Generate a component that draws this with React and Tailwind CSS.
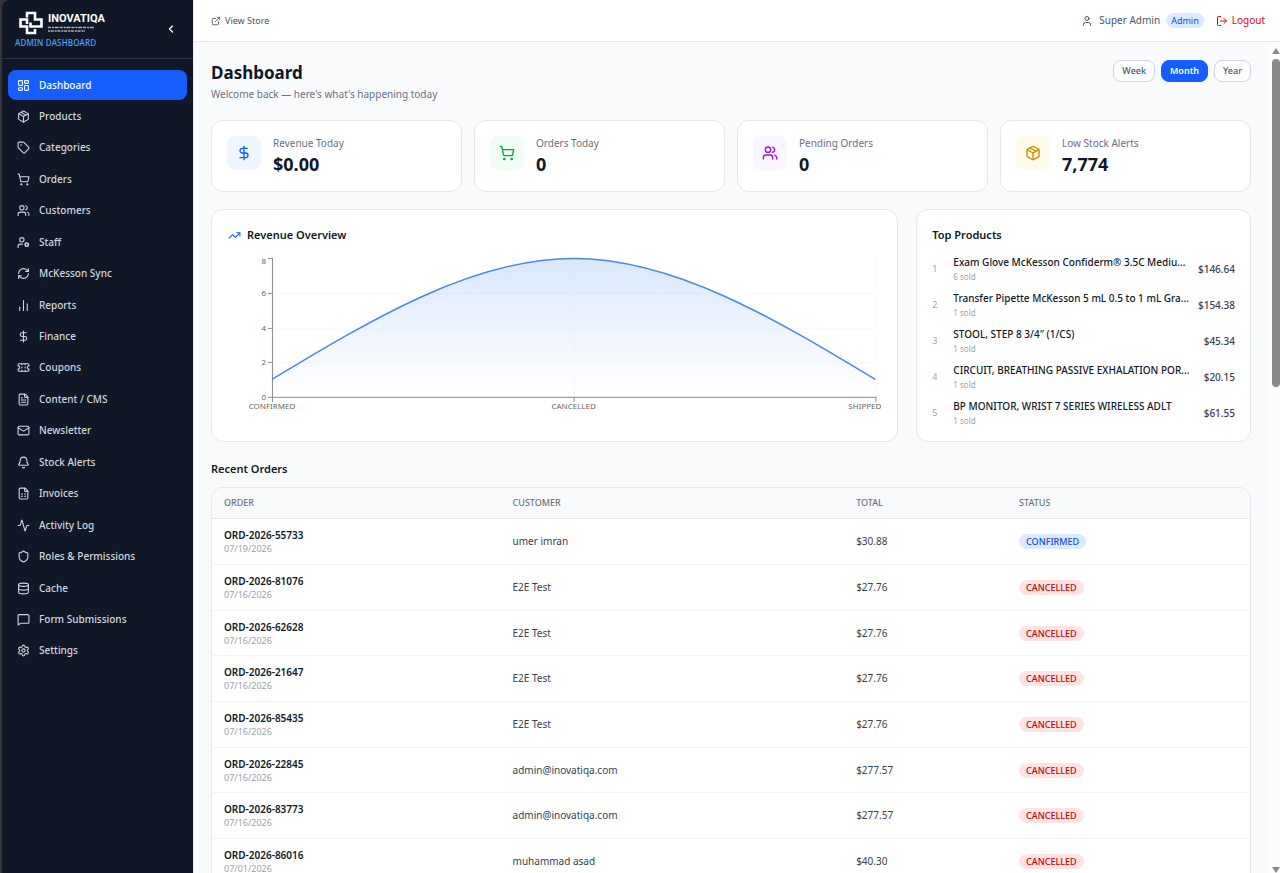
import React, { useState } from "react";
import {
  Activity,
  Bell,
  ChartNoAxesColumn,
  ChevronLeft,
  Database,
  DollarSign,
  ExternalLink,
  FileSpreadsheet,
  FileText,
  LayoutDashboard,
  LogOut,
  Mail,
  MessageSquare,
  Package,
  RefreshCw,
  Settings,
  Shield,
  ShoppingCart,
  Tag,
  TrendingUp,
  User,
  Users,
} from "lucide-react";

function Icon({ children, className }) {
  return (
    <svg viewBox="0 0 24 24" fill="none" stroke="currentColor" strokeWidth="2" strokeLinecap="round" strokeLinejoin="round" className={className} aria-hidden="true">
      {children}
    </svg>
  );
}

function CouponIcon({ className }) {
  return (
    <Icon className={className}>
      <path d="M2 9a3 3 0 0 1 0 6v2a2 2 0 0 0 2 2h16a2 2 0 0 0 2-2v-2a3 3 0 0 1 0-6V7a2 2 0 0 0-2-2H4a2 2 0 0 0-2 2Z" />
      <path d="M9 5v2M9 17v2M9 11v2M15 5v2M15 17v2M15 11v2" />
    </Icon>
  );
}

function StaffIcon({ className }) {
  return (
    <Icon className={className}>
      <circle cx="9" cy="7" r="4" />
      <path d="M10 15H6a4 4 0 0 0-4 4v2" />
      <circle cx="18" cy="16" r="3" strokeWidth="3" />
    </Icon>
  );
}

const NAV = [
  ["Dashboard", LayoutDashboard],
  ["Products", Package],
  ["Categories", Tag],
  ["Orders", ShoppingCart],
  ["Customers", Users],
  ["Staff", StaffIcon],
  ["McKesson Sync", RefreshCw],
  ["Reports", ChartNoAxesColumn],
  ["Finance", DollarSign],
  ["Coupons", CouponIcon],
  ["Content / CMS", FileText],
  ["Newsletter", Mail],
  ["Stock Alerts", Bell],
  ["Invoices", FileSpreadsheet],
  ["Activity Log", Activity],
  ["Roles & Permissions", Shield],
  ["Cache", Database],
  ["Form Submissions", MessageSquare],
  ["Settings", Settings],
];

const STATS = [
  { label: "Revenue Today", value: "$0.00", icon: DollarSign, tone: "bg-blue-50 text-blue-600" },
  { label: "Orders Today", value: "0", icon: ShoppingCart, tone: "bg-green-50 text-green-600" },
  { label: "Pending Orders", value: "0", icon: Users, tone: "bg-purple-50 text-purple-600" },
  { label: "Low Stock Alerts", value: "7,774", icon: Package, tone: "bg-yellow-50 text-yellow-600" },
];

const PRODUCTS = [
  ["Exam Glove McKesson Confiderm® 3.5C Mediu...", "6 sold", "$146.64"],
  ["Transfer Pipette McKesson 5 mL 0.5 to 1 mL Gra...", "1 sold", "$154.38"],
  ["STOOL, STEP 8 3/4″ (1/CS)", "1 sold", "$45.34"],
  ["CIRCUIT, BREATHING PASSIVE EXHALATION POR...", "1 sold", "$20.15"],
  ["BP MONITOR, WRIST 7 SERIES WIRELESS ADLT", "1 sold", "$61.55"],
];

const ORDERS = [
  ["ORD-2026-55733", "07/19/2026", "umer imran", "$30.88", "CONFIRMED"],
  ["ORD-2026-81076", "07/16/2026", "E2E Test", "$27.76", "CANCELLED"],
  ["ORD-2026-62628", "07/16/2026", "E2E Test", "$27.76", "CANCELLED"],
  ["ORD-2026-21647", "07/16/2026", "E2E Test", "$27.76", "CANCELLED"],
  ["ORD-2026-85435", "07/16/2026", "E2E Test", "$27.76", "CANCELLED"],
  ["ORD-2026-22845", "07/16/2026", "admin@inovatiqa.com", "$277.57", "CANCELLED"],
  ["ORD-2026-83773", "07/16/2026", "admin@inovatiqa.com", "$277.57", "CANCELLED"],
  ["ORD-2026-86016", "07/01/2026", "muhammad asad", "$40.30", "CANCELLED"],
];

function Logo() {
  return (
    <div className="flex items-center gap-[5px] text-white">
      <svg viewBox="0 0 24 24" className="size-6" fill="none" stroke="currentColor" strokeWidth="2.6" aria-hidden="true">
        <path d="M8 13V8.500H5.500M8 6.500V2h8v6.500h6.500v7H11.500V11.500" />
        <path d="M16 18V22H8v-6.500H1.500V8.500H6" />
      </svg>
      <div className="flex flex-col">
        <span className="font-['Liberation_Sans_Narrow',Roboto,sans-serif] text-[11px] leading-[12px] font-bold">INOVATIQA</span>
        <svg viewBox="0 0 48 7" className="mt-px h-[7px] w-12" stroke="currentColor" strokeWidth="1.500" opacity="0.65" aria-hidden="true">
          <path d="M0 1.500h46" strokeDasharray="3 1 2 0.700 4 1" />
          <path d="M0 5h37" strokeDasharray="2 0.700 3 1" />
        </svg>
      </div>
    </div>
  );
}

function Sidebar() {
  return (
    <aside className="flex w-[194px] shrink-0 flex-col border-r border-gray-200 bg-[#333333] pl-0.5">
      <div className="flex min-h-0 flex-1 flex-col rounded-tl-lg bg-[#101828]">
        <div className="flex h-[59px] shrink-0 items-center justify-between border-b border-[#2d3544] pr-4 pl-[13px]">
          <div className="flex flex-col gap-0.5 pt-0.5">
            <div className="pl-1">
              <Logo />
            </div>
            <span className="text-[8px] leading-[12px] font-medium tracking-wide text-blue-400">ADMIN DASHBOARD</span>
          </div>
          <button type="button" aria-label="Collapse sidebar" className="text-white">
            <ChevronLeft className="size-3" strokeWidth={2.5} />
          </button>
        </div>
        <nav className="mt-[11px] flex h-[596px] flex-col justify-between px-1.5">
          {NAV.map(([label, Glyph], i) => (
            <a
              key={label}
              href="#"
              aria-current={i === 0 ? "page" : undefined}
              className={
                i === 0
                  ? "flex h-[30px] items-center gap-[9px] rounded-lg bg-[#155dfc] px-[9px] text-[10px] font-medium text-white"
                  : "flex h-[30px] items-center gap-[9px] rounded-lg px-[9px] text-[10px] font-medium text-gray-300"
              }
            >
              <Glyph className="size-[13px]" />
              {label}
            </a>
          ))}
        </nav>
      </div>
    </aside>
  );
}

function Header() {
  return (
    <header className="flex h-[42px] shrink-0 items-center justify-between border-b border-gray-200 bg-white pr-[15px] pl-[17px]">
      <a href="#" className="flex items-center gap-1 text-[9px] text-gray-600">
        <ExternalLink className="size-[10px]" />
        View Store
      </a>
      <div className="flex items-center text-[10px]">
        <span className="flex items-center gap-1.5 text-gray-600">
          <User className="size-3" />
          Super Admin
        </span>
        <span className="ml-1.5 rounded-full bg-blue-100 px-[5px] text-[9px] leading-[15px] text-blue-700">Admin</span>
        <button type="button" className="ml-3 flex items-center gap-1 text-red-600">
          <LogOut className="size-3" />
          Logout
        </button>
      </div>
    </header>
  );
}

function StatCard({ label, value, icon: Glyph, tone }) {
  return (
    <div className="flex items-start gap-3 rounded-xl border border-gray-200 bg-white px-[15px] pt-[15px] pb-3.5">
      <div className={`flex size-[34px] items-center justify-center rounded-lg ${tone}`}>
        <Glyph className="size-4" />
      </div>
      <div>
        <p className="text-[10px] leading-[14px] text-gray-500">{label}</p>
        <p className="mt-0.5 text-[18px] leading-[25px] font-bold text-gray-900">{value}</p>
      </div>
    </div>
  );
}

const Y_TICKS = [
  [8, 8, 11],
  [6, 43, 43],
  [4, 78, 78],
  [2, 112, 112],
  [0, 147, 147],
];
const X_TICKS = [
  ["CONFIRMED", 44, "middle"],
  ["CANCELLED", 346, "middle"],
  ["SHIPPED", 654, "end"],
];

function RevenueChart() {
  return (
    <svg viewBox="0 0 654 176" className="w-full" role="img" aria-label="Revenue overview">
      <defs>
        <linearGradient id="revenueFill" x1="0" y1="0" x2="0" y2="1">
          <stop offset="5%" stopColor="#3b82f6" stopOpacity="0.18" />
          <stop offset="95%" stopColor="#3b82f6" stopOpacity="0" />
        </linearGradient>
      </defs>
      <g stroke="#f9f9fa" fill="none">
        <path d="M44 43.500H648M44 78.500H648M44 112.500H648M346.500 8V147M648.500 8V147" />
      </g>
      <path d="M44 129.600C144.700 68.800 245.300 8.500 346 8.500S547.300 68.800 648 129.600V147H44Z" fill="url(#revenueFill)" />
      <g stroke="#8a8a8a" fill="none">
        <path d="M44.500 8V152M44 147.500H649M346.500 147V152M648.500 147V152" />
        {Y_TICKS.map(([v, y]) => (
          <path key={v} d={`M40 ${y + 0.5}H44`} />
        ))}
      </g>
      <path d="M44 129.600C144.700 68.800 245.300 8.500 346 8.500S547.300 68.800 648 129.600" fill="none" stroke="#4a86e8" strokeWidth="1.500" />
      <g fill="#666666" className="text-[8px]">
        {Y_TICKS.map(([v, , y]) => (
          <text key={v} x="38" y={y + 3} textAnchor="end">{v}</text>
        ))}
        {X_TICKS.map(([label, x, anchor]) => (
          <text key={label} x={x} y="159" textAnchor={anchor}>{label}</text>
        ))}
      </g>
    </svg>
  );
}

function TopProducts() {
  return (
    <section className="rounded-xl border border-gray-200 bg-white px-[15px] pt-[17px]">
      <h2 className="text-[11px] leading-4 font-semibold text-gray-900">Top Products</h2>
      <ol className="mt-3 flex flex-col gap-2">
        {PRODUCTS.map(([name, sold, price], i) => (
          <li key={name} className="flex items-center">
            <span className="w-[21px] shrink-0 text-[9px] text-gray-400">{i + 1}</span>
            <div className="min-w-0 flex-1">
              <p className="truncate text-[10px] leading-[15px] font-medium text-gray-900">{name}</p>
              <p className="text-[8px] leading-[13px] text-gray-400">{sold}</p>
            </div>
            <span className="ml-1.5 text-[10px] font-medium text-gray-700">{price}</span>
          </li>
        ))}
      </ol>
    </section>
  );
}

function OrdersTable() {
  return (
    <div className="overflow-hidden rounded-xl border border-gray-200 bg-white">
      <table className="h-[397px] w-full table-fixed border-collapse text-left text-[10px]">
        <colgroup>
          <col className="w-[27.8%]" />
          <col className="w-[33.1%]" />
          <col className="w-[15.7%]" />
          <col />
        </colgroup>
        <thead className="h-[31px] bg-gray-50 text-[9px] text-gray-500">
          <tr className="border-b border-gray-200">
            {["ORDER", "CUSTOMER", "TOTAL", "STATUS"].map((h) => (
              <th key={h} scope="col" className="px-3 font-medium">{h}</th>
            ))}
          </tr>
        </thead>
        <tbody>
          {ORDERS.map(([id, date, customer, total, status]) => (
            <tr key={id} className="border-b border-gray-100">
              <td className="px-3">
                <p className="leading-[15px] font-semibold text-gray-900">{id}</p>
                <p className="text-[9px] leading-3 text-gray-400">{date}</p>
              </td>
              <td className="px-3 text-gray-700">{customer}</td>
              <td className="px-3 text-gray-700">{total}</td>
              <td className="px-3">
                <span
                  className={
                    status === "CONFIRMED"
                      ? "inline-block rounded-full bg-blue-100 px-[7px] text-[9px] leading-[15px] font-medium text-blue-700"
                      : "inline-block rounded-full bg-red-100 px-[7px] text-[9px] leading-[15px] font-medium text-red-700"
                  }
                >
                  {status}
                </span>
              </td>
            </tr>
          ))}
        </tbody>
      </table>
    </div>
  );
}

function ScrollRail() {
  return (
    <div className="flex w-[13px] shrink-0 flex-col items-end justify-between bg-[#fcfcfc] pt-1.5 pb-0" aria-hidden="true">
      <div className="flex flex-col items-center gap-[5px]">
        <svg viewBox="0 0 8 6" className="h-1.5 w-2 fill-[#8a8a8a]">
          <path d="M4 0L8 6H0Z" />
        </svg>
        <div className="h-[328px] w-2 rounded-full bg-[#8a8a8a]" />
      </div>
      <svg viewBox="0 0 8 6" className="h-1.5 w-2 fill-[#8a8a8a]">
        <path d="M0 0H8L4 6Z" />
      </svg>
    </div>
  );
}

export default function App() {
  const [range, setRange] = useState("Month");
  return (
    <div className="flex h-screen overflow-hidden bg-gray-50 font-['Noto_Sans',sans-serif]">
      <Sidebar />
      <div className="flex min-w-0 flex-1 flex-col">
        <Header />
        <div className="flex min-h-0 flex-1">
          <main className="min-w-0 flex-1 overflow-y-auto pt-[18px] pr-4 pb-4 pl-[17px] [scrollbar-width:none]">
            <div className="flex items-start justify-between">
              <div>
                <h1 className="text-[17px] leading-[26px] font-bold text-gray-900">Dashboard</h1>
                <p className="text-[10px] leading-4 text-gray-500">Welcome back — here's what's happening today</p>
              </div>
              <div className="flex gap-1.5">
                {["Week", "Month", "Year"].map((r) => (
                  <button
                    key={r}
                    type="button"
                    onClick={() => setRange(r)}
                    className={
                      r === range
                        ? "h-[22px] rounded-lg border border-[#155dfc] bg-[#155dfc] px-2 text-[9px] font-semibold text-white"
                        : "h-[22px] rounded-lg border border-gray-300 bg-white px-2 text-[9px] font-medium text-gray-600"
                    }
                  >
                    {r}
                  </button>
                ))}
              </div>
            </div>

            <div className="mt-[18px] grid grid-cols-4 gap-3">
              {STATS.map((s) => (
                <StatCard key={s.label} {...s} />
              ))}
            </div>

            <div className="mt-[17px] grid grid-cols-3 gap-[18px]">
              <section className="col-span-2 rounded-xl border border-gray-200 bg-white px-4 pt-[17px] pb-[15px]">
                <h2 className="mb-[7px] flex items-center gap-1.5 text-[11px] leading-4 font-semibold text-gray-900">
                  <TrendingUp className="size-[13px] text-blue-600" />
                  Revenue Overview
                </h2>
                <RevenueChart />
              </section>
              <TopProducts />
            </div>

            <h2 className="mt-[19px] mb-2.5 text-[11px] leading-4 font-semibold text-gray-900">Recent Orders</h2>
            <OrdersTable />
          </main>
          <ScrollRail />
        </div>
      </div>
    </div>
  );
}
